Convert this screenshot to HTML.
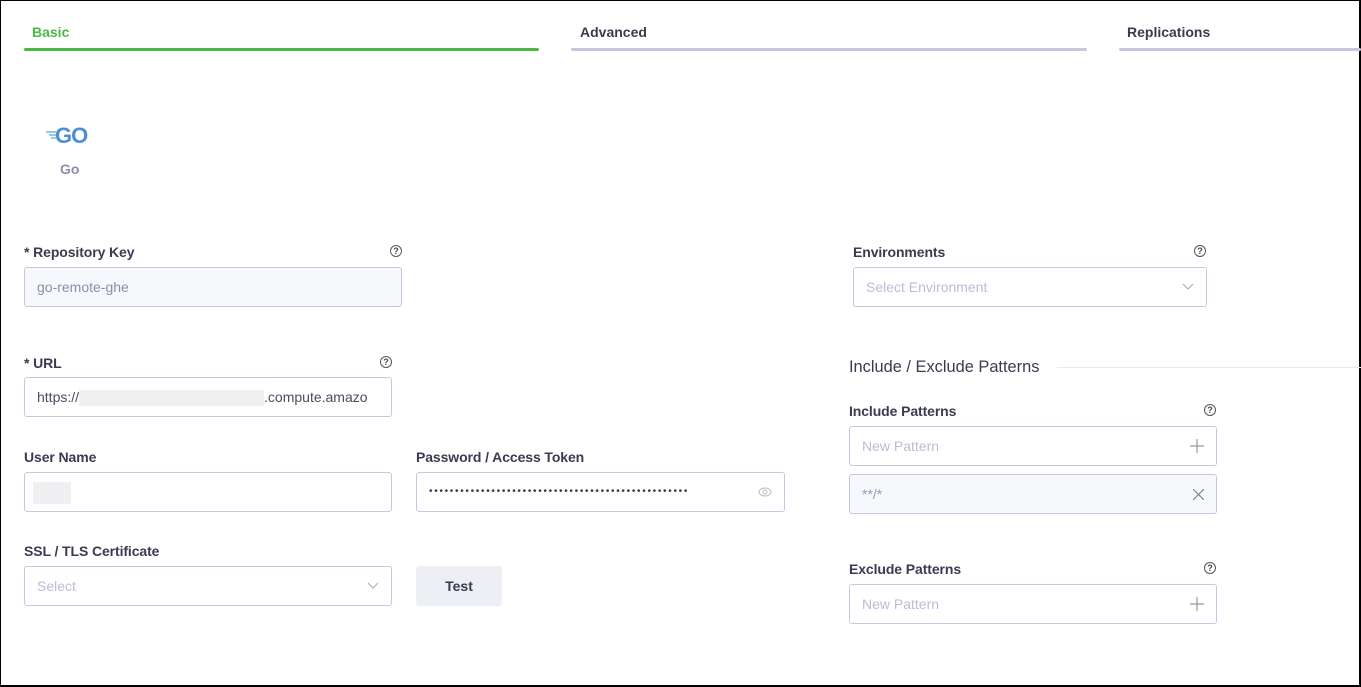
<!DOCTYPE html>
<html><head><meta charset="utf-8"><style>
*{box-sizing:border-box;margin:0;padding:0}
html,body{width:1361px;height:687px;overflow:hidden;background:#fff;font-family:"Liberation Sans",sans-serif}
.frame{position:absolute;left:0;top:0;width:1361px;height:687px;border:1px solid #000;border-right-width:2px;border-bottom-width:2px}
.a{position:absolute}
.tab{position:absolute;top:24px;font-size:14px;font-weight:bold;color:#3a3b4f}
.tl{position:absolute;top:48px;height:3px;background:#c6c6de;border-radius:2px}
.lbl{position:absolute;font-size:14px;font-weight:bold;color:#3a3b50;letter-spacing:-0.1px}
.in{position:absolute;height:40px;border:1px solid #c9c6e4;border-radius:3px;background:#fff;font-size:14px;color:#4a4b60;padding-left:12px;line-height:38px;white-space:nowrap;overflow:hidden}
.ph{color:#bdbbd8}
.help{position:absolute;width:12px;height:12px;border:1px solid #555;border-radius:50%;font-size:9px;line-height:10px;text-align:center;color:#444;font-weight:bold}
.ic{position:absolute;right:12px;top:12px}
</style></head><body>
<div class="frame"></div>
<div class="tab" style="left:32px;color:#4cb944">Basic</div>
<div class="tl" style="left:24px;width:515px;background:#4cb944"></div>
<div class="tab" style="left:580px">Advanced</div>
<div class="tl" style="left:571px;width:516px"></div>
<div class="tab" style="left:1127px">Replications</div>
<div class="tl" style="left:1119px;width:242px"></div>

<svg class="a" style="left:46px;top:124px" width="50" height="22" viewBox="0 0 50 22">
<g stroke="#5a9fd9" stroke-width="1.2"><line x1="0" y1="8" x2="10" y2="8"/><line x1="3" y1="11" x2="10" y2="11"/><line x1="5" y1="14" x2="10" y2="14"/></g>
<text x="9" y="19" font-family="Liberation Sans" font-weight="bold" font-size="22" letter-spacing="-1" fill="#4c90d4">GO</text>
</svg>
<div class="a" style="left:60px;top:161px;font-size:14px;font-weight:bold;color:#8e8da6">Go</div>

<div class="lbl" style="left:24px;top:244px">* Repository Key</div>
<div class="help" style="left:390px;top:245px">?</div>
<div class="in" style="left:24px;top:267px;width:378px;background:#f7f8fb;color:#8e8da6">go-remote-ghe</div>

<div class="lbl" style="left:24px;top:355px">* URL</div>
<div class="help" style="left:380px;top:356px">?</div>
<div class="in" style="left:24px;top:377px;width:368px">https://<span style="display:inline-block;width:185px;height:16px;background:#f0f0f2;vertical-align:middle"></span>.compute.amazo</div>

<div class="lbl" style="left:24px;top:449px">User Name</div>
<div class="in" style="left:24px;top:472px;width:368px"><span style="display:inline-block;width:38px;height:22px;background:#efeff1;vertical-align:middle;margin-left:-4px"></span></div>
<div class="lbl" style="left:416px;top:449px">Password / Access Token</div>
<div class="in" style="left:416px;top:472px;width:369px;font-size:10px;letter-spacing:1.7px;color:#3a3b50">••••••••••••••••••••••••••••••••••••••••••••••••••<svg class="ic" style="top:13px" width="14" height="12" viewBox="0 0 14 12"><ellipse cx="7" cy="6" rx="6" ry="4" fill="none" stroke="#bbb"/><circle cx="7" cy="6" r="2" fill="none" stroke="#bbb"/></svg></div>

<div class="lbl" style="left:24px;top:543px">SSL / TLS Certificate</div>
<div class="in ph" style="left:24px;top:566px;width:368px">Select<svg class="ic" style="top:15px" width="12" height="8" viewBox="0 0 12 8"><path d="M1 1l5 5 5-5" fill="none" stroke="#aaa"/></svg></div>
<div class="a" style="left:416px;top:566px;width:86px;height:40px;background:#eeeff4;border-radius:3px;text-align:center;line-height:40px;font-size:14px;font-weight:bold;color:#3a3b50">Test</div>

<div class="lbl" style="left:853px;top:244px">Environments</div>
<div class="help" style="left:1194px;top:245px">?</div>
<div class="in ph" style="left:853px;top:267px;width:354px">Select Environment<svg class="ic" style="top:15px" width="12" height="8" viewBox="0 0 12 8"><path d="M1 1l5 5 5-5" fill="none" stroke="#aaa"/></svg></div>

<div class="a" style="left:849px;top:358px;font-size:16.4px;color:#3a3b50">Include / Exclude Patterns</div>
<div class="a" style="left:1057px;top:367px;width:304px;height:1px;background:#e8e8ee"></div>

<div class="lbl" style="left:849px;top:403px">Include Patterns</div>
<div class="help" style="left:1204px;top:404px">?</div>
<div class="in ph" style="left:849px;top:426px;width:368px">New Pattern<svg class="ic" width="14" height="14" viewBox="0 0 14 14"><path d="M7 0v14M0 7h14" stroke="#999" stroke-width="1.2"/></svg></div>
<div class="in" style="left:849px;top:474px;width:368px;background:#f7f8fb;color:#9a99b0">**/*<svg class="ic" style="top:14px" width="11" height="11" viewBox="0 0 11 11"><path d="M0 0l11 11M11 0L0 11" stroke="#888" stroke-width="1.2"/></svg></div>

<div class="lbl" style="left:849px;top:561px">Exclude Patterns</div>
<div class="help" style="left:1204px;top:562px">?</div>
<div class="in ph" style="left:849px;top:584px;width:368px">New Pattern<svg class="ic" width="14" height="14" viewBox="0 0 14 14"><path d="M7 0v14M0 7h14" stroke="#999" stroke-width="1.2"/></svg></div>
</body></html>
